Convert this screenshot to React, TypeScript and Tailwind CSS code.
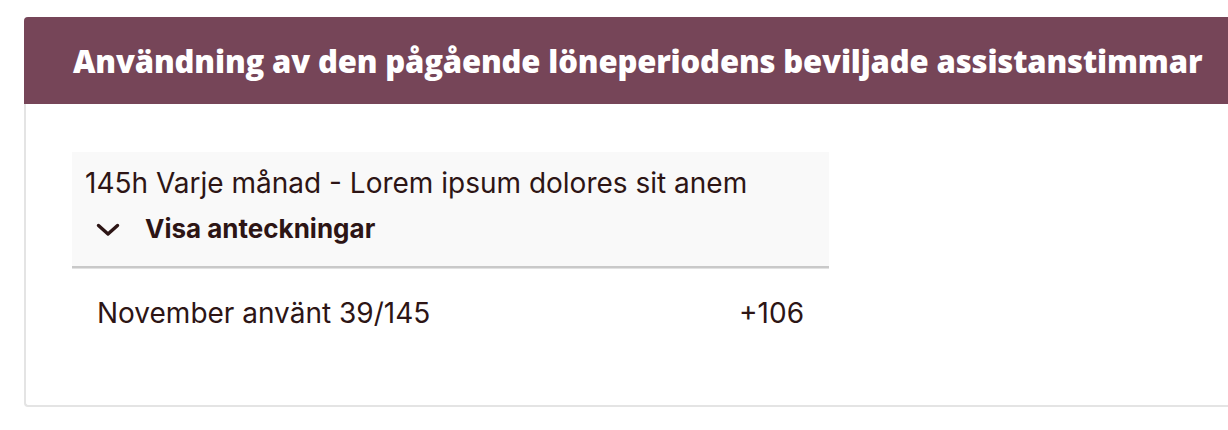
import React from "react";

export default function App() {
  return (
    <div className="w-[1228px] h-[430px] bg-white overflow-hidden pt-[17px] pl-[24px]">
      <div className="w-[1240px] rounded-[4px] border-b-2 border-l-2 border-[#e4e4e4] bg-white">
        <div className="-ml-[2px] flex h-[87px] items-center rounded-t-[4px] bg-[#764558] pl-[49px]">
          <h1
            className="whitespace-nowrap text-[31px] font-extrabold leading-[40px] tracking-[-0.15px] text-white"
            style={{ fontFamily: "'Open Sans', 'Noto Sans', sans-serif" }}
          >
            Användning av den pågående löneperiodens beviljade assistanstimmar
          </h1>
        </div>
        <div className="px-[46px] pb-[48px] pt-[48px]" style={{ fontFamily: "Inter, 'Noto Sans', sans-serif" }}>
          <div className="w-[757px] text-[#2d1515]">
            <div className="border-b-2 border-[#c9c9c9] bg-[#f9f9f9] pl-[13px] pt-[14px] pb-[21px] shadow-[0_1px_0_#e2e2e2]">
              <div className="text-[28px] leading-[34px]">145h Varje månad - Lorem ipsum dolores sit anem</div>
              <div className="mt-[13px] flex items-center">
                <svg width="24" height="14" viewBox="0 0 24 14" className="ml-[11px] mt-[1px]" fill="none">
                  <path d="M2.5 2.5 L12 11 L21.5 2.5" stroke="#2d1515" strokeWidth="3.4" strokeLinecap="round" strokeLinejoin="round" />
                </svg>
                <span className="ml-[25px] text-[26px] font-bold leading-[32px]">Visa anteckningar</span>
              </div>
            </div>
            <div className="flex h-[89px] items-center justify-between px-[25px] text-[28px]">
              <span>November använt 39/145</span>
              <span>+106</span>
            </div>
          </div>
        </div>
      </div>
    </div>
  );
}
